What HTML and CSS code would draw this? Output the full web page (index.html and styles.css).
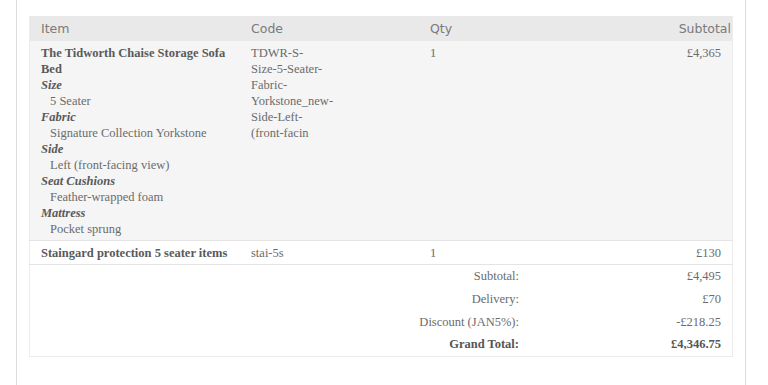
FILE: index.html
```html
<!DOCTYPE html>
<html lang="en">

<head>
    <meta name="viewport" content="width=device-width, initial-scale=1.0" />
    <title>Order Summary</title>
    <link rel="stylesheet" href="styles.css">
</head>

<body>
    <div class="panel">
        <table class="order-items">
            <thead>
                <tr>
                    <th class="col-item">Item</th>
                    <th class="col-code">Code</th>
                    <th class="col-qty">Qty</th>
                    <th class="col-subtotal">Subtotal</th>
                </tr>
            </thead>
            <tbody>
                <tr class="item-row shaded">
                    <td>
                        <div class="item-name">The Tidworth Chaise Storage Sofa Bed</div>
                        <dl class="item-options">
                            <dt>Size</dt>
                            <dd>5 Seater</dd>
                            <dt>Fabric</dt>
                            <dd>Signature Collection Yorkstone</dd>
                            <dt>Side</dt>
                            <dd>Left (front-facing view)</dd>
                            <dt>Seat Cushions</dt>
                            <dd>Feather-wrapped foam</dd>
                            <dt>Mattress</dt>
                            <dd>Pocket sprung</dd>
                        </dl>
                    </td>
                    <td class="sku">TDWR-S-<br>Size-5-Seater-<br>Fabric-<br>Yorkstone_new-<br>Side-Left-<br>(front-facin</td>
                    <td>1</td>
                    <td class="price">&pound;4,365</td>
                </tr>
                <tr class="item-row">
                    <td><div class="item-name">Staingard protection 5 seater items</div></td>
                    <td class="sku">stai-5s</td>
                    <td>1</td>
                    <td class="price">&pound;130</td>
                </tr>
            </tbody>
            <tfoot>
                <tr class="first">
                    <td colspan="3" class="label">Subtotal:</td>
                    <td class="price">&pound;4,495</td>
                </tr>
                <tr>
                    <td colspan="3" class="label">Delivery:</td>
                    <td class="price">&pound;70</td>
                </tr>
                <tr>
                    <td colspan="3" class="label">Discount (JAN5%):</td>
                    <td class="price">-&pound;218.25</td>
                </tr>
                <tr class="grand-total">
                    <td colspan="3" class="label">Grand Total:</td>
                    <td class="price">&pound;4,346.75</td>
                </tr>
            </tfoot>
        </table>
    </div>
</body>

</html>
```

FILE: styles.css
```css
body {
    margin: 0;
    background-color: #fff;
    font-family: "Liberation Serif", "Times New Roman", serif;
    font-size: 12.5px;
    color: #6b6b6b;
}

.panel {
    margin: 0 22px 0 16px;
    padding: 16px 12px 30px 12px;
    border-left: 1px solid #dcdcdc;
    border-right: 1px solid #dcdcdc;
    min-height: 339px;
}

.order-items {
    width: 100%;
    border-collapse: collapse;
    border: 1px solid #ececec;
    border-top: none;
}

.order-items th {
    height: 25px;
    padding: 0 1px 0 11px;
    background-color: #e9e9e9;
    font-family: "DejaVu Sans", Verdana, sans-serif;
    font-size: 12.5px;
    font-weight: normal;
    color: #7a7a7a;
    text-align: left;
}

.order-items th.col-subtotal {
    text-align: right;
}

.col-item {
    width: 198px;
}

.col-code {
    width: 167px;
}

.col-qty {
    width: 100px;
}

.order-items td {
    padding: 4px 11px 3px 11px;
    line-height: 16px;
    vertical-align: top;
}

.item-row td {
    border-bottom: 1px solid #e4e4e4;
}

.item-row.shaded td {
    background-color: #f5f5f5;
}

.item-name {
    font-weight: bold;
    color: #5a5a5a;
}

.item-options {
    margin: 0;
}

.item-options dt {
    font-weight: bold;
    font-style: italic;
    color: #5a5a5a;
}

.item-options dd {
    margin: 0 0 0 9px;
}

.price {
    text-align: right;
}

tfoot td {
    height: 16px;
}

tfoot tr.first td {
    padding-top: 3px;
}

tfoot td.label {
    text-align: right;
    padding-right: 12px;
}

tfoot tr td {
    padding-bottom: 7px;
}

.grand-total td {
    font-weight: bold;
    color: #555;
    padding-top: 3px;
    padding-bottom: 4px;
}
```
